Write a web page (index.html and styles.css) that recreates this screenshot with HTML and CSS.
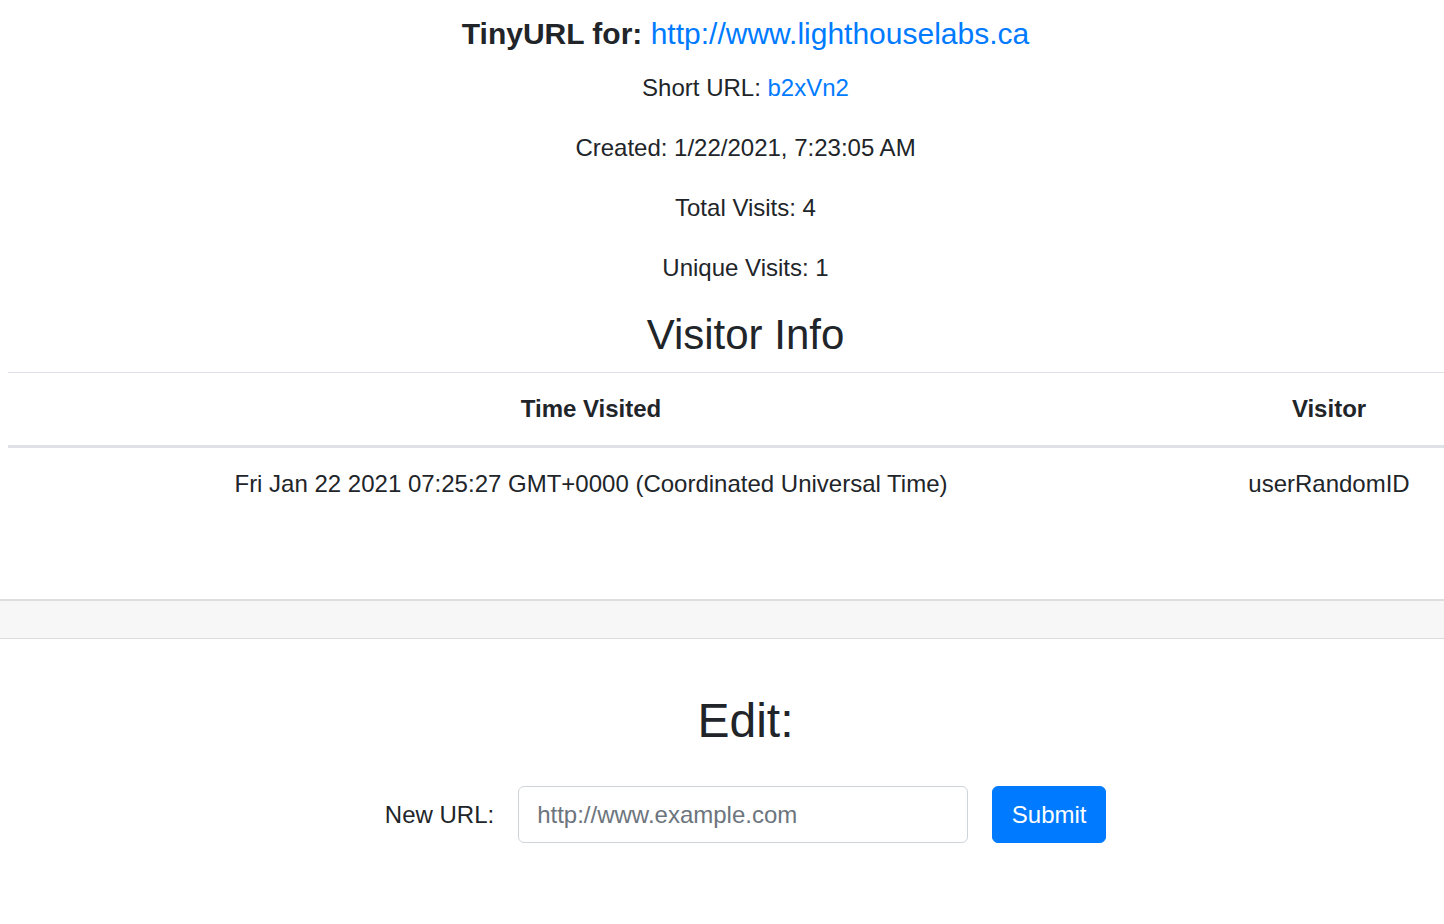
FILE: index.html
```html
<!DOCTYPE html>
<html lang="en">
<head>
<meta charset="utf-8">
<title>TinyURL</title>
<link rel="stylesheet" href="styles.css">
</head>
<body>
<main class="page">
  <h5 class="title"><strong>TinyURL for:</strong> <a href="#">http://www.lighthouselabs.ca</a></h5>
  <p class="info">Short URL: <a href="#">b2xVn2</a></p>
  <p class="info">Created: 1/22/2021, 7:23:05 AM</p>
  <p class="info">Total Visits: 4</p>
  <p class="info">Unique Visits: 1</p>
  <h3 class="section-title">Visitor Info</h3>
  <table class="visits">
    <thead>
      <tr><th class="col-time">Time Visited</th><th class="col-visitor">Visitor</th></tr>
    </thead>
    <tbody>
      <tr><td>Fri Jan 22 2021 07:25:27 GMT+0000 (Coordinated Universal Time)</td><td>userRandomID</td></tr>
    </tbody>
  </table>
</main>
<div class="band"></div>
<section class="page edit">
  <h2 class="edit-title">Edit:</h2>
  <form class="edit-form">
    <label class="edit-label" for="newurl">New URL:</label>
    <input class="edit-input" id="newurl" type="text" placeholder="http://www.example.com">
    <button class="edit-btn" type="button">Submit</button>
  </form>
</section>
</body>
</html>
```

FILE: styles.css
```css
html, body {
  margin: 0;
  padding: 0;
  overflow-x: hidden;
  background: #fff;
}
body {
  font-family: "Liberation Sans", Arial, sans-serif;
  font-size: 24px;
  line-height: 36px;
  color: #212529;
}
a {
  color: #007bff;
  text-decoration: none;
}
.page {
  width: 1475px;
  margin: 0 8px;
  text-align: center;
}
main.page {
  padding-top: 16px;
}
.title {
  font-size: 30px;
  line-height: 36px;
  font-weight: 400;
  margin: 0 0 18px;
}
.title strong {
  font-weight: 700;
}
.info {
  margin: 0 0 24px;
}
.section-title {
  font-size: 42px;
  line-height: 50px;
  font-weight: 400;
  margin: 0 0 12px;
}
.visits {
  width: 1476px;
  table-layout: fixed;
  border-collapse: collapse;
  margin: 0 0 79px;
}
.visits th,
.visits td {
  padding: 18px;
  line-height: 36px;
  text-align: center;
  border-top: 1px solid #dee2e6;
}
.visits th {
  font-weight: 700;
  border-bottom: 3px solid #dee2e6;
}
.col-time { width: 1130px; }
.col-visitor { width: 274px; }
.band {
  height: 37px;
  background: #f7f7f7;
  border-top: 2px solid #dedede;
  border-bottom: 1px solid #dcdcdc;
}
.edit-title {
  font-size: 48px;
  line-height: 58px;
  font-weight: 400;
  margin: 53px 0 36px;
}
.edit-form {
  display: flex;
  justify-content: center;
  align-items: center;
  gap: 24px;
}
.edit-label {
  font-size: 24px;
}
.edit-input {
  box-sizing: border-box;
  width: 450px;
  height: 57px;
  padding: 9px 18px;
  font-family: "Liberation Sans", Arial, sans-serif;
  font-size: 24px;
  color: #495057;
  border: 1px solid #ced4da;
  border-radius: 6px;
  background: #fff;
  outline: none;
}
.edit-input::placeholder {
  color: #6c757d;
}
.edit-btn {
  box-sizing: border-box;
  width: 114px;
  height: 57px;
  font-family: "Liberation Sans", Arial, sans-serif;
  font-size: 24px;
  color: #fff;
  background: #007bff;
  border: 1px solid #007bff;
  border-radius: 6px;
  padding: 0;
}
```
